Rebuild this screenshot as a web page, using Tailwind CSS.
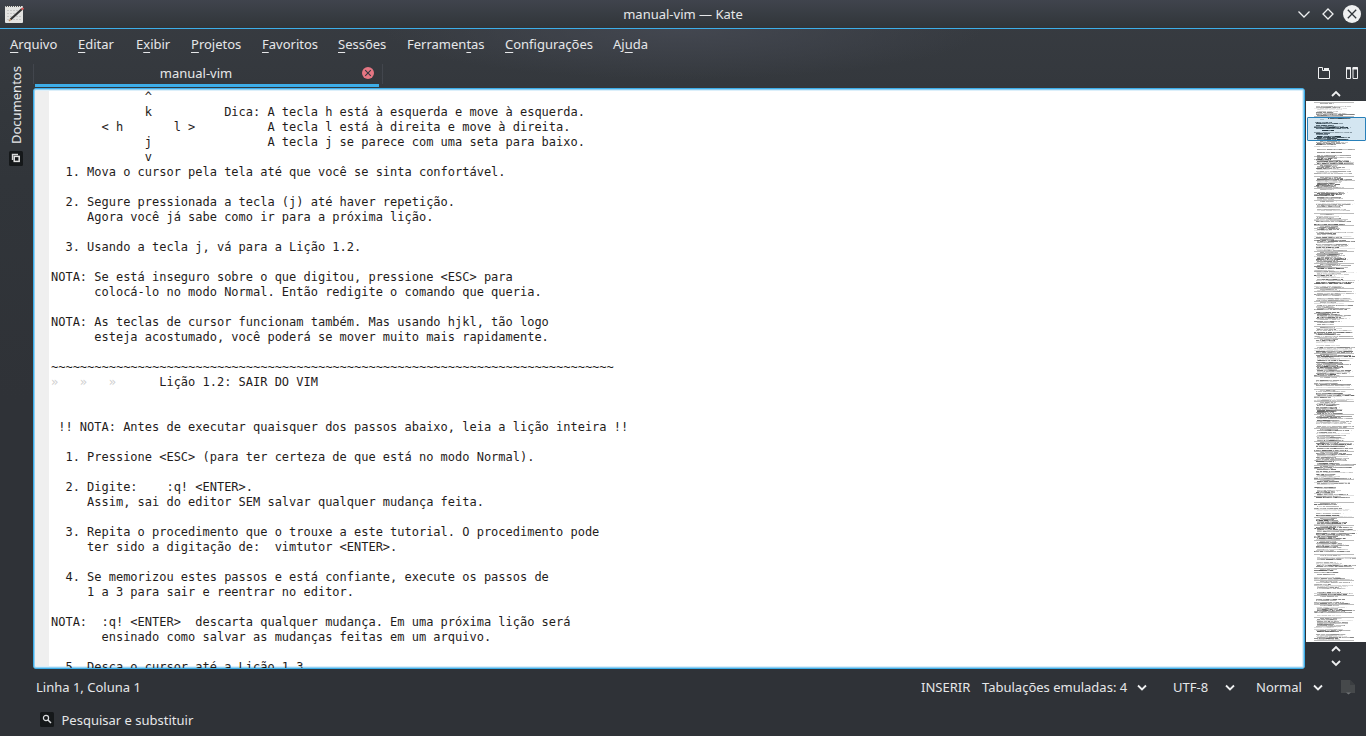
<!DOCTYPE html>
<html lang="pt-BR">
<head>
<meta charset="utf-8">
<title>manual-vim — Kate</title>
<script src="https://cdn.jsdelivr.net/npm/@tailwindcss/browser@4"></script>
</head>
<body class="w-[1366px] h-[736px] overflow-hidden bg-[#2f3237] font-['Noto_Sans',sans-serif] text-[13px] leading-[18px] text-[#e6e7e9]">
<div class="flex flex-col w-full h-full bg-[radial-gradient(ellipse_300px_50px_at_683px_29px,#434750_0%,#43475000_100%),linear-gradient(180deg,#383c42_0px,#34383d_85px,#31353a_180px,#2f3237_400px)]">
  <header class="relative flex h-[29px] shrink-0 items-center justify-center border-b border-[#3daee9] bg-linear-to-b from-[#40444d] to-[#303539]">
    <svg class="absolute left-[5px] top-[5px]" width="19" height="18" viewBox="0 0 19 18">
      <rect x="0" y="1" width="18" height="17" rx="1" fill="#e3e3e1"/>
      <path d="M1 1.500H17" stroke="#555" stroke-dasharray="1 1"/>
      <path d="M2 5.500h14M2 8.500h12M2 11.500h14M2 14.500h14" stroke="#c6c6c4" stroke-dasharray="2 1"/>
      <path d="M5.500 14.500 17 4" stroke="#333" stroke-width="2.200"/>
      <path d="M16.500 4.500 18.500 3" stroke="#d65a5a" stroke-width="2"/>
      <path d="M4 16l1.800-1.800" stroke="#b98a60" stroke-width="1.500"/>
    </svg>
    <h1>manual-vim — Kate</h1>
    <div class="absolute right-[5px] top-[5px] flex items-center gap-[6px]">
      <svg width="18" height="18" viewBox="0 0 18 18" fill="none" stroke="#eff0f1" stroke-width="1.300"><path d="M3.500 6.500 9 12l5.500-5.500"/></svg>
      <svg width="18" height="18" viewBox="0 0 18 18" fill="none" stroke="#eff0f1" stroke-width="1.300"><path d="M9 4l5 5-5 5-5-5z"/></svg>
      <svg width="18" height="18" viewBox="0 0 18 18"><circle cx="9" cy="9" r="9" fill="#eff0f1"/><path d="M4.800 4.800l8.400 8.400M13.200 4.800l-8.400 8.400" stroke="#31363b" stroke-width="1.300"/></svg>
    </div>
  </header>
  <nav class="flex h-[31px] shrink-0 items-center pl-[10px] pb-[2px] [&_u]:underline-offset-[3px] [&_u]:decoration-1">
    <span class="w-[68px]"><u>A</u>rquivo</span><span class="w-[58px]"><u>E</u>ditar</span><span class="w-[55px]">E<u>x</u>ibir</span><span class="w-[71px]"><u>P</u>rojetos</span><span class="w-[76px]"><u>F</u>avoritos</span><span class="w-[69px]"><u>S</u>essões</span><span class="w-[98px]">Ferramen<u>t</u>as</span><span class="w-[108px]"><u>C</u>onfigurações</span><span>Aj<u>u</u>da</span>
  </nav>
  <div class="flex h-[609px] shrink-0">
    <aside class="flex w-[33px] shrink-0 flex-col items-start pt-[6px]">
      <span class="ml-[7px] h-[78px] rotate-180 [writing-mode:vertical-rl] leading-[18px]">Documentos</span>
      <svg class="mt-[7px] ml-[9px]" width="14" height="15" viewBox="0 0 14 15"><rect width="14" height="15" rx="1.500" fill="#15181a"/><path d="M3.500 9V3.500h5.500" fill="none" stroke="#d5d6d8" stroke-width="1.400"/><rect x="5.200" y="5.400" width="5" height="5" fill="#15181a" stroke="#e5e5e5" stroke-width="1.500"/></svg>
    </aside>
    <main class="flex w-[1272px] shrink-0 flex-col">
      <div class="flex h-[28px] shrink-0">
        <div class="mt-1 h-[20px] w-px bg-[#42464d]"></div>
        <div class="ml-px mb-px flex w-[344px] items-center border-b-3 border-[#3daee9]">
          <span class="flex-1 pr-[5px] pt-[2px] text-center">manual-vim</span>
          <svg class="mr-[5px] mt-[1px]" width="12" height="12" viewBox="0 0 12 12"><circle cx="6" cy="6" r="6" fill="#e57683"/><path d="M3.200 3.200l5.600 5.600M8.800 3.200 3.200 8.800" stroke="#343840" stroke-width="1.100"/></svg>
        </div>
        <div class="ml-[3px] mt-1 h-[20px] w-px bg-[#42464d]"></div>
      </div>
      <section class="flex h-[581px] overflow-hidden rounded-[3px] border border-[#3daee9] bg-white shadow-[inset_0_0_0_1px_#93d0f2,inset_0_0_0_2px_#dceffa]">
        <div class="my-[2px] ml-px w-[14px] bg-[#efefef]"></div>
        <pre class="my-px pl-[2px] font-['DejaVu_Sans_Mono',monospace] text-[12px] leading-[15px] tracking-[-0.01px] text-[#1f1c1b]">             ^
             k          Dica: A tecla h está à esquerda e move à esquerda.
       &lt; h       l &gt;          A tecla l está à direita e move à direita.
             j                A tecla j se parece com uma seta para baixo.
             v
  1. Mova o cursor pela tela até que você se sinta confortável.

  2. Segure pressionada a tecla (j) até haver repetição.
     Agora você já sabe como ir para a próxima lição.

  3. Usando a tecla j, vá para a Lição 1.2.

NOTA: Se está inseguro sobre o que digitou, pressione &lt;ESC&gt; para
      colocá-lo no modo Normal. Então redigite o comando que queria.

NOTA: As teclas de cursor funcionam também. Mas usando hjkl, tão logo
      esteja acostumado, você poderá se mover muito mais rapidamente.

~~~~~~~~~~~~~~~~~~~~~~~~~~~~~~~~~~~~~~~~~~~~~~~~~~~~~~~~~~~~~~~~~~~~~~~~~~~~~~
<span class="text-[#cfcfcf]">»   »   »</span>      Lição 1.2: SAIR DO VIM


 !! NOTA: Antes de executar quaisquer dos passos abaixo, leia a lição inteira !!

  1. Pressione &lt;ESC&gt; (para ter certeza de que está no modo Normal).

  2. Digite:    :q! &lt;ENTER&gt;.
     Assim, sai do editor SEM salvar qualquer mudança feita.

  3. Repita o procedimento que o trouxe a este tutorial. O procedimento pode
     ter sido a digitação de:  vimtutor &lt;ENTER&gt;.

  4. Se memorizou estes passos e está confiante, execute os passos de
     1 a 3 para sair e reentrar no editor.

NOTA:  :q! &lt;ENTER&gt;  descarta qualquer mudança. Em uma próxima lição será
       ensinado como salvar as mudanças feitas em um arquivo.

  5. Desça o cursor até a Lição 1.3.
</pre>
      </section>
    </main>
    <aside class="flex flex-1 flex-col">
      <div class="flex h-[27px] items-center gap-[16px] pb-[2px] pl-[13px]">
        <svg width="12" height="12" viewBox="0 0 12 12"><path d="M.500 11.500V.500H4.500V3.500H11.500V11.500z" fill="none" stroke="#eff0f1"/><path d="M6 1h5v3H6z" fill="#eff0f1"/></svg>
        <svg width="12" height="12" viewBox="0 0 12 12" fill="none" stroke="#eff0f1"><path d="M.500.500h4v11h-4zM7 .500h4.500v11h-4.500z"/><path d="M0 1.500h5M6.500 1.500h5.500" stroke-width="2"/></svg>
      </div>
      <div class="flex h-[14px] items-center pl-[26px]"><svg width="10" height="8" viewBox="0 0 10 8" fill="none" stroke="#eff0f1" stroke-width="1.800"><path d="M1 6l4-4 4 4"/></svg></div>
      <div class="relative ml-px h-[541px] bg-white">
        <svg id="map" width="60" height="541" viewBox="0 0 60 541" shape-rendering="crispEdges"></svg>
        <div class="absolute left-[1px] top-[16px] h-[24px] w-[59px] rounded-[1px] border border-[#2980b9] bg-[#2980b9]/20"></div>
      </div>
      <div class="flex h-[27px] flex-col items-start gap-[6px] pl-[26px] pt-[3px]">
        <svg width="10" height="8" viewBox="0 0 10 8" fill="none" stroke="#eff0f1" stroke-width="1.800"><path d="M1 6l4-4 4 4"/></svg>
        <svg width="10" height="8" viewBox="0 0 10 8" fill="none" stroke="#eff0f1" stroke-width="1.800"><path d="M1 2l4 4 4-4"/></svg>
      </div>
    </aside>
  </div>
  <div class="flex h-[36px] shrink-0 items-center pl-[36px]">
    <span class="w-[885px]">Linha 1, Coluna 1</span>
    <span class="w-[61px]">INSERIR</span>
    <span class="w-[155px]">Tabulações emuladas: 4</span>
    <svg class="mr-[26px] mt-px" width="10" height="8" viewBox="0 0 10 8" fill="none" stroke="#eff0f1" stroke-width="1.800"><path d="M1 1.500l4 4 4-4"/></svg>
    <span class="w-[52px]">UTF-8</span>
    <svg class="mr-[21px] mt-px" width="10" height="8" viewBox="0 0 10 8" fill="none" stroke="#eff0f1" stroke-width="1.800"><path d="M1 1.500l4 4 4-4"/></svg>
    <span class="w-[57px]">Normal</span>
    <svg class="mr-[18px] mt-px" width="10" height="8" viewBox="0 0 10 8" fill="none" stroke="#eff0f1" stroke-width="1.800"><path d="M1 1.500l4 4 4-4"/></svg>
    <svg width="15" height="15" viewBox="0 0 15 15"><path d="M0 0h9l5 5v8H0z" fill="#46494b"/><path d="M9 0v5h5z" fill="#3b3e41"/><path d="M5 12.500h5l-2.500 2z" fill="#717477"/></svg>
  </div>
  <footer class="flex h-[31px] items-center gap-[7.500px] pb-[2px] pl-[40px]">
    <svg width="14" height="15" viewBox="0 0 14 15"><rect width="14" height="15" rx="1.500" fill="#15181a"/><circle cx="6" cy="6" r="2.600" fill="none" stroke="#dcdde0" stroke-width="1.200"/><path d="M8 8l3 3" stroke="#dcdde0" stroke-width="1.500"/></svg>
    <span>Pesquisar e substituir</span>
  </footer>
</div>
<script>
// Document overview: one thin row per source line, a rule at each lesson boundary.
const rules = [1, 15, 39, 63, 75, 87, 99, 112, 124, 137, 150, 162, 187, 200, 225, 237, 252, 275, 288, 300, 313, 327, 340, 350, 364, 378, 401, 416, 424, 439, 453, 467, 479, 494, 503, 516, 539];
let seed = 17;
const rnd = () => (seed = (seed * 16807) % 2147483647) / 2147483647;
let out = '';
const row = (y, x, w, o) => {
  for (let c = x; c < x + w;) {
    const n = 1 + Math.floor(rnd() * 4);
    const len = Math.min(n, x + w - c);
    out += `<rect x="${c}" y="${y}" width="${len}" height="1" fill="#222" opacity="${(o * (0.5 + rnd() * 0.6)).toFixed(2)}"/>`;
    if (rnd() < 0.22) { out += `<rect x="${c + n}" y="${y}" width="1" height="1" fill="#222" opacity="${(o * 0.25).toFixed(2)}"/>`; c++; }
    c += n;
  }
};
for (let y = 1; y < 540; y++) {
  if (rules.includes(y)) { out += `<rect x="8" y="${y}" width="40" height="1" fill="#bbb"/>`; continue; }
  if (y >= 17 && y < 39) continue;
  if (rules.includes(y - 1)) { row(y, 14, 14 + Math.floor(rnd() * 8), 0.4); continue; }
  const r = rnd();
  if (r < 0.22) continue;
  row(y, r > 0.86 ? 8 : 10 + Math.floor(rnd() * 2), 17 + Math.floor(rnd() * 23), 0.14 + rnd() * 0.55);
}
// Rows inside the visible range are drawn stronger.
[[17,22,22,.9],[18,14,4,.4],[21,9,17,.8],[22,10,27,.8],[24,10,18,.9],[25,8,30,.5],[26,8,34,1],[27,10,33,.8],[29,16,12,1],[31,8,38,.5],[32,10,14,.8],[33,10,12,.9],[35,11,24,1],[36,10,34,.8],[37,8,24,.8],[38,11,32,.9]].forEach(a => row(...a));
document.getElementById('map').innerHTML = out;
</script>
</body>
</html>
